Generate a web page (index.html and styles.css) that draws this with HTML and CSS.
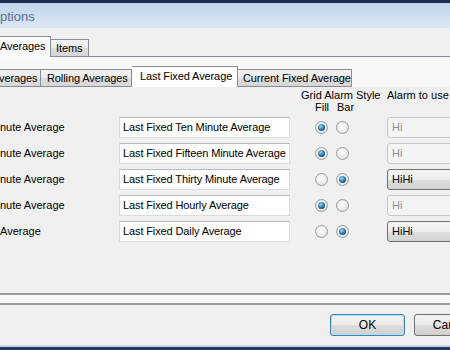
FILE: index.html
```html
<!DOCTYPE html>
<html>
<head>
<meta charset="utf-8">
<link rel="stylesheet" href="styles.css">
</head>
<body>
<div class="window">
  <div class="titlebar"><span class="title">ptions</span></div>
  <div class="client">
    <div class="tabstrip outer">
      <div class="tab sel first">Averages</div>
      <div class="tab items">Items</div>
    </div>
    <div class="outer-panel">
      <div class="tabstrip inner">
        <div class="tab t1">verages</div>
        <div class="tab t2">Rolling Averages</div>
        <div class="tab sel t3">Last Fixed Average</div>
        <div class="tab t4">Current Fixed Average</div>
      </div>
      <div class="inner-panel">
        <div class="head">
          <div class="hline h1"><span class="grid-h">Grid Alarm Style</span><span>Alarm to use</span></div>
          <div class="hline h2"><span class="fill-h">Fill</span><span>Bar</span></div>
        </div>
        <div class="rows">
          <div class="row">
            <div class="label">nute Average</div>
            <div class="textbox">Last Fixed Ten Minute Average</div>
            <div class="radio on"></div><div class="radio bar"></div>
            <div class="combo off">Hi</div>
          </div>
          <div class="row">
            <div class="label">nute Average</div>
            <div class="textbox">Last Fixed Fifteen Minute Average</div>
            <div class="radio on"></div><div class="radio bar"></div>
            <div class="combo off">Hi</div>
          </div>
          <div class="row">
            <div class="label">nute Average</div>
            <div class="textbox">Last Fixed Thirty Minute Average</div>
            <div class="radio"></div><div class="radio bar on"></div>
            <div class="combo">HiHi</div>
          </div>
          <div class="row">
            <div class="label">nute Average</div>
            <div class="textbox">Last Fixed Hourly Average</div>
            <div class="radio on"></div><div class="radio bar"></div>
            <div class="combo off">Hi</div>
          </div>
          <div class="row">
            <div class="label">Average</div>
            <div class="textbox">Last Fixed Daily Average</div>
            <div class="radio"></div><div class="radio bar on"></div>
            <div class="combo">HiHi</div>
          </div>
        </div>
      </div>
    </div>
    <div class="buttons">
      <div class="btn default">OK</div>
      <div class="btn">Cancel</div>
    </div>
  </div>
  <div class="bottom"></div>
</div>
</body>
</html>
```
FILE: styles.css
```css
html, body {
  margin: 0;
  padding: 0;
  width: 450px;
  height: 350px;
  overflow: hidden;
}
body {
  font-family: "Liberation Sans", Arial, sans-serif;
  font-size: 11px;
  color: #000;
  background: #f0f0f0;
}
.window {
  width: 520px;
  height: 350px;
  display: flex;
  flex-direction: column;
}
.titlebar {
  height: 25px;
  border-top: 3px solid #1b2b52;
  background: linear-gradient(#bfd3ea, #d3e1f1 60%, #dce7f4);
  display: flex;
  align-items: center;
}
.title {
  font-size: 13px;
  color: #57708f;
  padding-top: 2px;
}
.client {
  flex: 1;
  background: #f0f0f0;
  padding-top: 8px;
}
.tabstrip {
  display: flex;
  align-items: flex-end;
}
.tabstrip.outer {
  height: 20px;
  border-bottom: 1px solid #898c95;
}
.tab {
  box-sizing: border-box;
  height: 17px;
  border: 1px solid #898c95;
  border-bottom: none;
  background: linear-gradient(#f3f3f3, #ebebeb 50%, #dedede 51%, #d6d6d6);
  display: flex;
  align-items: center;
  padding: 0 6px 1px;
  white-space: nowrap;
  letter-spacing: -0.1px;
}
.tab.sel {
  height: 21px;
  margin-bottom: -1px;
  background: #fbfbfb;
  position: relative;
  z-index: 1;
  padding-bottom: 2px;
}
.outer .tab.first {
  width: 52px;
  margin-left: -1px;
  border-left: none;
  padding-left: 1px;
}
.outer .tab.items {
  width: 38px;
  padding-left: 5px;
  border-left: none;
}
.outer-panel {
  background: #f8f8f8;
  padding-top: 9px;
  padding-bottom: 8px;
  border-bottom: 2px solid #9c9c9c;
}
.tabstrip.inner {
  height: 21px;
}
.inner .tab {
  height: 18px;
  border-bottom: 1px solid #898c95;
}
.inner .tab.sel {
  height: 21px;
  margin-bottom: 0;
  border-bottom: none;
  background: #ffffff;
}
.inner .t1 { width: 42px; margin-left: -1px; border-left: none; padding-left: 0; }
.inner .t2 { width: 91px; padding-left: 6px; border-left: none; }
.inner .t3 { width: 106px; padding-left: 8px; border-left: none; border-right: 1px solid #898c95; }
.inner .t4 { width: 114px; padding-left: 5px; border-left: none; }
.inner-panel {
  background: #f0f0f0;
  height: 208px;
  padding-top: 2px;
  box-sizing: border-box;
  border-bottom: 2px solid #9c9c9c;
}
.hline {
  height: 12px;
  line-height: 12px;
  display: flex;
  white-space: nowrap;
}
.h1 { padding-left: 301px; }
.grid-h { width: 86px; }
.h2 { padding-left: 315px; }
.fill-h { width: 22px; }
.rows {
  margin-top: 1px;
}
.row {
  height: 26px;
  display: flex;
  align-items: center;
}
.label {
  width: 119px;
  white-space: nowrap;
}
.textbox {
  box-sizing: border-box;
  width: 171px;
  height: 21px;
  line-height: 19px;
  padding-left: 3px;
  background: #fff;
  border: 1px solid #d9dbe0;
  border-top-color: #b8bac0;
  white-space: nowrap;
  overflow: hidden;
  letter-spacing: -0.12px;
}
.radio {
  box-sizing: border-box;
  width: 13px;
  height: 13px;
  border-radius: 50%;
  border: 1px solid #979a9e;
  background: radial-gradient(circle at 45% 40%, #ffffff, #e9e9e9 60%, #d8d8d8);
  margin-left: 25px;
  display: flex;
  align-items: center;
  justify-content: center;
}
.radio.bar { margin-left: 8px; }
.radio.on::after {
  content: "";
  width: 7px;
  height: 7px;
  border-radius: 50%;
  background: radial-gradient(circle at 40% 35%, #9edcf8, #2f7fb3 45%, #123e63 90%);
}
.combo {
  box-sizing: border-box;
  width: 90px;
  height: 21px;
  margin-left: 38px;
  padding-left: 4px;
  line-height: 19px;
  border-radius: 3px;
  border: 1px solid #707070;
  background: linear-gradient(#f5f5f5, #ececec 50%, #dedede 51%, #d3d3d3);
}
.combo.off {
  border-color: #c8c8c8;
  background: #f4f4f4;
  color: #8e8e8e;
}
.buttons {
  display: flex;
  padding-top: 9px;
  padding-left: 330px;
  gap: 9px;
}
.btn {
  box-sizing: border-box;
  width: 75px;
  height: 22px;
  border-radius: 3px;
  border: 1px solid #707070;
  background: linear-gradient(#f3f3f3, #ebebeb 50%, #dddddd 51%, #cfcfcf);
  display: flex;
  align-items: center;
  justify-content: center;
  font-size: 12px;
}
.btn.default {
  border-color: #3c7fb1;
  box-shadow: inset 0 0 0 1px #b5e0f5;
}
.bottom {
  height: 5px;
  border-top: 2px solid #c4d4e9;
  background: #26395a;
  box-sizing: border-box;
}
```
